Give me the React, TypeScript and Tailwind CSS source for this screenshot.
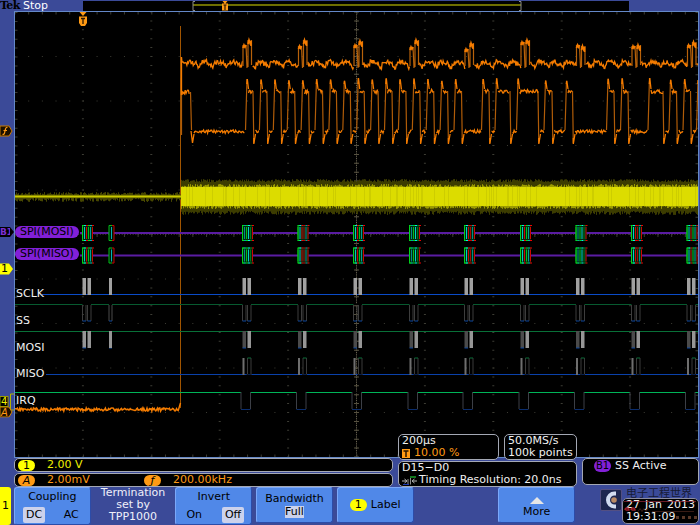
import type { ReactNode } from "react";

type Edge = { rise: number; fall: number };
type Marker = { y: number; node: ReactNode };

// Visible window of the graticule in screen units
const LEFT = 15;
const TOP = 12;
const WIDTH = 683;
const HEIGHT = 445;

const DIV_X = 68.4;
const DIV_Y = 44.5;
const CENTER_X = 356.5;
const CENTER_Y = 234.5;
const TRIGGER_X = 181;

const PACKETS = [242.5, 298, 353.5, 409.5, 464.5, 520.5, 576, 631.5, 687];

// Small seeded generator so the noise is the same on each render
function createNoise(seed: number) {
  let state = seed;
  return () => {
    state = (state * 1664525 + 1013904223) % 4294967296;
    return state / 4294967296;
  };
}

const topPercent = (y: number) => `${((y - TOP) / HEIGHT) * 100}%`;

// Demodulated data: regular preamble first, then the payload
const DATA_EDGES: Edge[] = [
  ...Array.from({ length: 16 }, (_, i) => ({
    rise: 246 + i * 13.9,
    fall: 253 + i * 13.9,
  })),
  { rise: 482, fall: 489 },
  { rise: 495.5, fall: 510 },
  { rise: 517, fall: 538 },
  { rise: 544.5, fall: 552 },
  { rise: 565.5, fall: 572.5 },
  { rise: 607, fall: 614 },
  { rise: 621, fall: 628 },
  { rise: 648.5, fall: 663 },
  { rise: 669.5, fall: 676.5 },
  { rise: 683.5, fall: 690.5 },
  { rise: 697, fall: 702 },
];

function noisyRun(from: number, to: number, y: number, amp: number, rnd: () => number) {
  let d = "";
  for (let x = from; x <= to; x += 0.8) {
    d += `${d ? "L" : "M"}${x.toFixed(1)} ${(y + (rnd() - 0.5) * amp).toFixed(1)}`;
  }
  return d;
}

function buildData() {
  const rnd = createNoise(7);
  let edges = "M181.5 91V135M190.5 92L191.5 130";
  let flats = noisyRun(182, 190, 92, 4, rnd) + "M191 131L192.500 143L194 134";
  flats += noisyRun(194, 245, 131.5, 3.4, rnd);
  edges += "M181 78V95";
  DATA_EDGES.forEach((edge, i) => {
    const next = DATA_EDGES[i + 1];
    const peak = 78 + rnd() * 3;
    edges += `M${edge.rise - 0.5} 130L${edge.rise + 1} ${peak}M${edge.fall} 91L${edge.fall + 0.8} 143`;
    flats += `M${edge.rise + 0.8} 84L${edge.rise + 1.3} ${peak}L${edge.rise + 2.5} 89`;
    flats += noisyRun(edge.rise + 2.5, edge.fall, 91.5, 4, rnd);
    flats += `M${edge.fall + 0.8} 138V144L${edge.fall + 2.5} 134`;
    if (next) flats += noisyRun(edge.fall + 2.5, next.rise - 0.5, 131.5, 3.4, rnd);
  });
  return { edges, flats };
}

function buildEnvelope() {
  const rnd = createNoise(21);
  let d = "M181.5 95V57";
  let broken = false;
  for (let x = 182; x < 698; x += 0.7) {
    if (PACKETS.some((p) => x >= p + 0.5 && x <= p + 9.5)) {
      broken = true;
      continue;
    }
    // slow hump with a sharp dip every 14 units
    const phase = (x - 186) % 14;
    const dip = phase > 11.5 ? 3.5 : phase > 10 ? 1.5 : 0;
    const hump = phase > 2 && phase < 7 ? -1.5 : 0;
    const y = 63.5 + dip + hump + (rnd() - 0.5) * 4.6;
    d += `${broken ? "M" : "L"}${x.toFixed(1)} ${y.toFixed(1)}`;
    broken = false;
  }
  return d;
}

const PULSES = PACKETS.map((p, i) => {
  const a = [45, 46, 45, 47, 49, 42, 45, 46, 45][i];
  const b = [40, 40, 41, 40, 43, 40, 46, 45, 42][i];
  return {
    sides: `M${p + 0.5} 66V${a}M${p + 3.5} ${a}L${p + 4.5} 68M${p + 5.5} 67V${b}M${p + 9} ${b}V65`,
    tops: `M${p + 0.5} ${a + 3}L${p + 1.5} ${a}L${p + 2.5} ${a + 2}L${p + 3.5} ${a}M${p + 5.5} ${b + 4}L${p + 6.5} ${b}L${p + 7.5} ${b + 3}L${p + 8.5} ${b + 1}V${b + 6}`,
  };
});

function Graticule() {
  const dots: ReactNode[] = [];
  for (let i = -4; i <= 4; i++) {
    const y = CENTER_Y + i * DIV_Y;
    dots.push(
      <line key={`h${i}`} x1={LEFT} x2={698} y1={y} y2={y} strokeDasharray="1 12.68" strokeDashoffset="0.5" />
    );
    const x = CENTER_X + i * DIV_X;
    dots.push(
      <line key={`v${i}`} x1={x} x2={x} y1={TOP} y2={457} strokeDasharray="1 7.9" strokeDashoffset="0.5" strokeWidth="2" />
    );
  }
  return (
    <g stroke="#3c3c34">
      {dots}
      <line x1={CENTER_X} x2={CENTER_X} y1={TOP} y2={457} stroke="#6b6553" strokeDasharray="1 0.78" />
      <line x1={CENTER_X} x2={CENTER_X} y1={TOP} y2={457} strokeWidth="5" stroke="#55503f" strokeDasharray="1 7.9" strokeDashoffset="0.5" />
      <line x1={LEFT} x2={698} y1={CENTER_Y} y2={CENTER_Y} strokeDasharray="1 1.736" />
      <line x1={LEFT} x2={698} y1={CENTER_Y} y2={CENTER_Y} strokeWidth="5" strokeDasharray="1 12.68" strokeDashoffset="0.5" />
      <line x1={LEFT} x2={698} y1={13} y2={13} strokeWidth="3" strokeDasharray="1 12.68" strokeDashoffset="0.5" />
      <line x1={LEFT} x2={698} y1={456} y2={456} strokeWidth="3" strokeDasharray="1 12.68" strokeDashoffset="0.5" />
      <line x1={16} x2={16} y1={TOP} y2={457} strokeWidth="3" strokeDasharray="1 7.9" />
      <line x1={697} x2={697} y1={TOP} y2={457} strokeWidth="3" strokeDasharray="1 7.9" />
    </g>
  );
}

function YellowTrace() {
  const rnd = createNoise(3);
  let quiet = "";
  let dim = "";
  let mid = "";
  for (let x = LEFT; x < TRIGGER_X; x++) {
    quiet += `M${x + 0.5} ${(195 - rnd() * 3).toFixed(1)}V${(198 + rnd() * 4).toFixed(1)}`;
  }
  for (let x = TRIGGER_X; x < 698; x++) {
    dim += `M${x + 0.5} ${(182 - rnd() * 3).toFixed(1)}V${(211 + rnd() * 4).toFixed(1)}`;
    mid += `M${x + 0.5} ${(187 - rnd() * 3).toFixed(1)}V${(206 + rnd() * 3).toFixed(1)}`;
  }
  return (
    <g>
      <path d={quiet} stroke="#464600" />
      <line x1={LEFT} x2={TRIGGER_X} y1={196.5} y2={196.5} stroke="#c9c900" strokeWidth="2" />
      <path d={dim} stroke="#3c3c00" />
      <path d={mid} stroke="#9b9b00" />
      <rect x={TRIGGER_X} y={187} width={517} height={19} fill="#dcdc00" />
      {Array.from({ length: 90 }, (_, i) => (
        <rect key={i} x={TRIGGER_X + Math.floor(rnd() * 516)} y={187} width={1} height={19} fill="#cdcd00" />
      ))}
    </g>
  );
}

const BUS_COLORS = [
  ["#00dc1e", "#00e6e0", "#f00000", "#00dc1e", "#00b4b4", "#f00000"],
  ["#00dc1e", "#00a0a0", "#00dc1e", "#00f0e6", "#00821e", "#f00000"],
  ["#00dc1e", "#00f0f0", "#f00000", "#c80000", "#00a0a0", "#f00000"],
];

function BusLane({ y }: { y: number }) {
  return (
    <g>
      <line x1={80} x2={698} y1={y} y2={y} stroke="#5a1ca2" strokeWidth="2" />
      {[82.5, ...PACKETS].map((p, i) => (
        <g key={p}>
          <rect x={p} y={y - 8} width={10.5} height={16} fill="#002a10" />
          <path d={`M${p + 3} ${y - 7.5}H${p}V${y + 7.5}H${p + 3}`} fill="none" stroke="#00be19" />
          {BUS_COLORS[i % 3].map((color, n) => (
            <g key={n} stroke={color}>
              <line x1={p + n * 2} x2={p + n * 2} y1={y - 6} y2={y + 6} strokeOpacity="0.85" />
              <path d={`M${p + n * 2 - 0.5} ${y - 7.5}h2M${p + n * 2 - 0.5} ${y + 7.5}h2`} />
            </g>
          ))}
        </g>
      ))}
      <rect x={109} y={y - 8} width={5} height={16} fill="#001407" />
      <path d={`M112 ${y - 7.5}H109V${y + 7.5}H112`} fill="none" stroke="#00be19" />
      <line x1={111.5} x2={111.5} y1={y - 6} y2={y + 6} stroke="#00b4b4" />
      <path d={`M112 ${y - 7.5}H114V${y + 7.5}H112`} fill="none" stroke="#c80000" />
    </g>
  );
}

function DigitalLanes() {
  const starts = [82.5, ...PACKETS];
  return (
    <g fill="none">
      {/* SCLK */}
      <line x1={42} x2={698} y1={294.5} y2={294.5} stroke="#0a4bc8" />
      {/* SS and MOSI idle high, MISO idles low */}
      <line x1={LEFT} x2={698} y1={304.5} y2={304.5} stroke="#075a2f" />
      <line x1={LEFT} x2={698} y1={331.5} y2={331.5} stroke="#087038" />
      <line x1={46} x2={698} y1={374.5} y2={374.5} stroke="#0a41aa" />
      {starts.map((p, i) => (
        <g key={p}>
          <path d={`M${p} 278h3.500v17h-3.500zM${p + 5} 278h3.500v17h-3.500z`} fill="#a0a0a0" />
          <rect x={p} y={304} width={8.5} height={1} fill="#000" />
          <path d={`M${p} 305V321M${p + 3.5} 321V305M${p + 5} 305V321M${p + 8.5} 321V305`} stroke="#3d3d3d" />
          <path d={`M${p} 321h3.500M${p + 5} 321h3.500`} stroke="#0a46a0" />
          <rect x={p} y={331} width={3.5} height={17} fill={i === 0 ? "#969696" : "#4b4b4b"} />
          <rect x={p + 5} y={331} width={3.5} height={17} fill="#969696" />
          <path d={`M${p} 348h3.500`} stroke="#0a46a0" />
          {i > 0 && (
            <>
              <rect x={p} y={358} width={2} height={17} fill="#6e6e6e" />
              <path d={`M${p + 5} 375V358M${p + 8.5} 358V375`} stroke="#3a3a3a" />
              <path d={`M${p + 5} 358h3.500`} stroke="#087038" />
              <path d={`M${p + 4} 374.500h5`} stroke="#000" strokeOpacity="0.5" />
            </>
          )}
        </g>
      ))}
      <rect x={109} y={278} width={3} height={17} fill="#a0a0a0" />
      <rect x={109} y={304} width={3} height={1} fill="#000" />
      <path d="M109 305V321M112 321V305" stroke="#4a4a4a" />
      <path d="M109 321H112M109 348H112" stroke="#0a46a0" />
      <rect x={109} y={331} width={3} height={17} fill="#969696" />
      {/* IRQ */}
      <line x1={LEFT} x2={698} y1={392.5} y2={392.5} stroke="#00b458" strokeWidth="1.200" />
      {PACKETS.map((p) => (
        <g key={p}>
          <rect x={p - 1.5} y={391.5} width={9.5} height={2} fill="#000" />
          <path d={`M${p - 1.5} 392V409M${p + 8} 392V409`} stroke="#3c3f46" />
          <path d={`M${p - 1.5} 409.500H${p + 8}`} stroke="#0a2d6e" />
        </g>
      ))}
    </g>
  );
}

function Waveforms() {
  const data = buildData();
  const baseline = noisyRun(LEFT, 179, 409.5, 3.2, createNoise(11));
  return (
    <svg
      viewBox={`${LEFT} ${TOP} ${WIDTH} ${HEIGHT}`}
      className="block h-auto w-full"
      role="img"
      aria-label="Waveforms"
    >
      <Graticule />
      <g fill="none">
        <path d="M180.500 26V408" stroke="#a05400" />
        <YellowTrace />
        <BusLane y={233} />
        <BusLane y={255.5} />
        <DigitalLanes />
        <path d={data.edges} stroke="#b05c08" strokeWidth="1.200" />
        <path d={data.flats} stroke="#f57c00" strokeWidth="1.300" />
        <path d={buildEnvelope()} stroke="#f57c00" strokeWidth="1.300" />
        {PULSES.map((pulse) => (
          <g key={pulse.sides}>
            <path d={pulse.sides} stroke="#b8620a" strokeWidth="1.200" />
            <path d={pulse.tops} stroke="#f57c00" strokeWidth="1.700" />
          </g>
        ))}
        <path d={`${baseline}L180.500 403`} stroke="#f57c00" strokeWidth="1.500" />
      </g>
      {/* Trigger position */}
      <path d="M79.500 12H86.500L83 16z" fill="#ff9a14" />
      <path d="M79 16.500H87V23L85 26H81L79 23z" fill="#ff9a14" />
      <path d="M81 18.500H85M83 18.500V24" stroke="#2a1600" strokeWidth="1.300" />
    </svg>
  );
}

// Channel handles in the left gutter
const MARKERS: Marker[] = [
  {
    y: 131,
    node: (
      <svg viewBox="0 0 13 12" className="h-3 w-[13px]">
        <path d="M0 1H9L12 6L9 11H0z" fill="#1c1000" stroke="#c87800" />
        <path d="M7.500 2.500Q6 2 5.500 4L4.500 8Q4 9.800 2.500 9.300M3.500 5.500H7" fill="none" stroke="#ff9a14" strokeWidth="1.200" />
      </svg>
    ),
  },
  {
    y: 232,
    node: (
      <span className="flex items-center">
        <span className="w-2.5 bg-black text-[9px] leading-[10px] font-bold tracking-tighter text-[#7a2fd0]">B1</span>
        <svg viewBox="0 0 4 10" className="h-2.5 w-1">
          <path d="M0 0L4 5L0 10z" />
        </svg>
      </span>
    ),
  },
  {
    y: 268.5,
    node: (
      <span className="relative block">
        <svg viewBox="0 0 13 12" className="h-3 w-[13px]">
          <path d="M0 .500H9L13 6L9 11.500H0z" fill="#ffff00" />
        </svg>
        <span className="absolute inset-0 pl-px text-[11px] leading-3 text-black">1</span>
      </span>
    ),
  },
  {
    y: 401,
    node: (
      <span className="relative block">
        <svg viewBox="0 0 14 18" className="h-[18px] w-3.5">
          <rect x="0" y="3.500" width="8" height="10" fill="#000" stroke="#9a9a00" />
          <path d="M14 1H10.500V17H14" fill="none" stroke="#b4b400" />
        </svg>
        <span className="absolute inset-0 pl-px text-[10px] leading-[17px] text-[#f0f000]">4</span>
      </span>
    ),
  },
  {
    y: 411.5,
    node: (
      <span className="relative block">
        <svg viewBox="0 0 13 11" className="h-[11px] w-[13px]">
          <path d="M0 .500H9L12 5.500L9 10.500H0z" fill="#1c1000" stroke="#d28200" />
        </svg>
        <span className="absolute inset-0 pl-px text-[10px] leading-[11px] text-[#ff9a14] italic">A</span>
      </span>
    ),
  },
];

const LANE_LABELS = [
  { y: 294, text: "SCLK" },
  { y: 321, text: "SS" },
  { y: 347.5, text: "MOSI" },
  { y: 374, text: "MISO" },
  { y: 400.5, text: "IRQ" },
];

const BUS_LABELS = [
  { y: 232, text: "SPI(MOSI)" },
  { y: 254, text: "SPI(MISO)" },
];

function TopBar() {
  return (
    <header className="flex h-[11px] items-center">
      <span className="w-[23px] font-['DejaVu_Serif',serif] text-[11px] leading-[11px] font-bold tracking-tighter text-black">
        Tek
      </span>
      <span className="w-[60px] text-[11px] leading-[11px] text-white">Stop</span>
      <svg viewBox="83 0 546 11" preserveAspectRatio="none" className="h-[11px] min-w-0 flex-1" role="img" aria-label="Record overview">
        <rect x="83" y="1" width="546" height="10" fill="#000" />
        <path d="M193 5H521" stroke="#6e6e00" strokeWidth="2" />
        <path d="M195 1.500H193V10.500H195M519 1.500H521V10.500H519" fill="none" stroke="#8c8c8c" />
        <path d="M222.500 1H227.500L225 4zM222 3.500H228V10.500H222z" fill="#ff9a14" />
        <path d="M223.500 5H226.500M225 5V10" stroke="#2a1600" strokeWidth="1.200" />
      </svg>
      <span className="w-[71px]" />
    </header>
  );
}

function Plot() {
  return (
    <main className="flex pr-px">
      <div className="relative w-3.5">
        {MARKERS.map((marker) => (
          <div
            key={marker.y}
            className="absolute left-0 -translate-y-1/2"
            style={{ top: topPercent(marker.y) }}
          >
            {marker.node}
          </div>
        ))}
      </div>
      <div className="relative min-w-0 flex-1 border border-[#6488c8] bg-black">
        <Waveforms />
        {BUS_LABELS.map((label) => (
          <span
            key={label.text}
            className="absolute left-0 -translate-y-1/2 rounded-full bg-[#8220d8] px-[5px] text-[11px] leading-3 text-black"
            style={{ top: topPercent(label.y) }}
          >
            {label.text}
          </span>
        ))}
        {LANE_LABELS.map((label) => (
          <span
            key={label.text}
            className="absolute left-px -translate-y-1/2 text-[11px] leading-3 text-[#f0f0f0]"
            style={{ top: topPercent(label.y) }}
          >
            {label.text}
          </span>
        ))}
      </div>
    </main>
  );
}

function Readouts() {
  return (
    <section className="relative -mt-6 flex items-end gap-[5px] pr-px pl-3.5 text-[11px] leading-3 text-[#f0f0f0]">
      <div className="flex min-w-0 flex-1 flex-col gap-px">
        <div className="flex h-3.5 items-center rounded-[5px] border border-[#a4a8b4] bg-black pl-[3px] text-[#f0f000]">
          <span className="w-[17px] rounded-full bg-[#ffff00] text-center leading-[11px] text-black">1</span>
          <span className="pl-3">2.00 V</span>
        </div>
        <div className="flex h-3.5 items-center rounded-[5px] border border-[#a4a8b4] bg-black pl-[3px] text-[#ff9a14]">
          <span className="w-[17px] rounded-full bg-[#ff9a14] text-center leading-[11px] text-black italic">A</span>
          <span className="w-[109px] pl-3">2.00mV</span>
          <span className="w-[17px] rounded-full bg-[#ff9a14] text-center leading-[11px] text-black italic">ƒ</span>
          <span className="pl-3">200.00kHz</span>
        </div>
      </div>

      <div className="flex w-[179px] flex-col gap-px">
        <div className="flex gap-[5px]">
          <div className="w-[101px] rounded-[5px] border border-[#a4a8b4] bg-black pl-[3px]">
            <p>200µs</p>
            <p className="flex items-center gap-1 text-[#ff9a14]">
              <svg viewBox="0 0 8 9" className="h-[9px] w-2">
                <path d="M0 0H8V9H0z" fill="#ff9a14" />
                <path d="M1.500 2H6.500M4 2V8" stroke="#2a1600" strokeWidth="1.500" />
              </svg>
              10.00 %
            </p>
          </div>
          <div className="flex-1 rounded-[5px] border border-[#a4a8b4] bg-black pl-[3px] whitespace-nowrap">
            <p>50.0MS/s</p>
            <p>100k points</p>
          </div>
        </div>
        <div className="rounded-[5px] border border-[#a4a8b4] bg-black pl-[3px]">
          <p>D15−D0</p>
          <p className="flex items-center gap-0.5 whitespace-nowrap">
            <svg viewBox="0 0 15 9" className="h-[9px] w-[15px]">
              <path d="M0 5H4M2.500 3L5 5L2.500 7M15 5H11M12.500 3L10 5L12.500 7" fill="none" stroke="#b4b4b4" />
              <path d="M6 8.500V3M8.500 8.500V2" stroke="#8c8c8c" />
              <path d="M8 1H14" stroke="#14a028" strokeWidth="1.500" />
              <path d="M1 8.500H7" stroke="#1e3cb4" />
            </svg>
            Timing Resolution: 20.0ns
          </p>
        </div>
      </div>

      <div className="mb-0.5 flex h-[27px] w-[117px] items-start gap-1 rounded-[5px] border border-[#a4a8b4] bg-black pt-px pl-[11px]">
        <span className="w-[17px] rounded-full bg-[#8220d8] text-center text-[10px] leading-3 text-black">B1</span>
        <span>SS Active</span>
      </div>
    </section>
  );
}

const TILE =
  "min-w-0 rounded-[3px] border border-[#7aa8fa] border-r-[#2c4ca8] border-b-[#2c4ca8] bg-[#5088e8] text-[11px] leading-3 text-black";
const SELECTED = "rounded-xs bg-[#ccd2ec] px-[3px]";

function SiteLogo() {
  return (
    <svg viewBox="0 0 22 22" className="mt-0.5 size-[22px]">
      <rect x=".500" y=".500" width="21" height="21" rx="1.500" fill="#1e2750" stroke="#6e5f8c" strokeOpacity="0.6" />
      <path d="M16 4.500H14.500A6.500 6.500 0 0 0 14.500 17.500H16" fill="none" stroke="#d2dcf0" strokeWidth="4" />
      <circle cx="14" cy="11" r="2.800" fill="#b98a64" />
    </svg>
  );
}

function SoftMenu() {
  return (
    <nav className="flex flex-1">
      <span className="flex w-[11px] items-center justify-center rounded-r-[3px] bg-[#ffff00] text-[11px] text-black">
        1
      </span>
      <div className="ml-[3px] grid min-w-0 flex-1 grid-cols-[repeat(7,minmax(0,1fr))_120px] gap-1 pr-px">
        <button type="button" className={`${TILE} flex flex-col justify-between pt-[3px] pb-px`}>
          <span className="w-full text-center">Coupling</span>
          <span className="flex w-full justify-between pr-[11px] pl-[8px] leading-4">
            <span className={SELECTED}>DC</span>
            <span>AC</span>
          </span>
        </button>
        <p className="-mx-1 text-center text-[11px] leading-3 text-[#f0f0fa]">
          Termination set by TPP1000
        </p>
        <button type="button" className={`${TILE} flex flex-col justify-between pt-[3px] pb-px`}>
          <span className="w-full text-center">Invert</span>
          <span className="flex w-full justify-between pr-[7px] pl-[10px] leading-4">
            <span>On</span>
            <span className={SELECTED}>Off</span>
          </span>
        </button>
        <button type="button" className={`${TILE} mb-0.5 flex flex-col items-center justify-center gap-px`}>
          <span>Bandwidth</span>
          <span className="bg-[#ccd2ec]">Full</span>
        </button>
        <button type="button" className={`${TILE} mb-0.5 flex items-center justify-center gap-1`}>
          <span className="w-[17px] rounded-full bg-[#ffff00]">1</span>
          <span>Label</span>
        </button>
        <span />
        <button type="button" className={`${TILE} mb-0.5 flex flex-col items-center justify-center gap-0.5`}>
          <svg viewBox="0 0 14 7" className="mt-1 h-[7px] w-3.5">
            <path d="M7 0L14 7H0z" fill="#e6e6e6" />
          </svg>
          <span>More</span>
        </button>
        <div className="flex items-start justify-end">
          <SiteLogo />
          <div className="relative w-[77px]">
            <p className="pl-1 font-['Noto_Sans_CJK_SC',sans-serif] text-[11px] leading-[11px] whitespace-nowrap text-[#161a34]">
              电子工程世界
            </p>
            <time
              dateTime="2013-01-27T19:31:09"
              className="block rounded-[5px] border border-[#8c8ca0] bg-black pl-[3px] text-[11px] leading-3 whitespace-nowrap text-[#f0f0f0]"
            >
              <span className="flex justify-between pr-[3px]">
                <span>27</span>
                <span>Jan</span>
                <span>2013</span>
              </span>
              <span className="block">19:31:09</span>
            </time>
            {/* Faded site stamp over the clock */}
            <svg viewBox="0 0 77 24" className="absolute bottom-0 left-0 h-6 w-[77px]" aria-hidden="true">
              <path d="M2 1.500H74" stroke="#9b2a3c" strokeOpacity="0.7" />
              <path d="M3 10a2 2 0 1 1 4 0H3.500M9 10a2 2 0 1 1 4 0H9.500" fill="none" stroke="#a01e28" strokeWidth="1.300" />
              <path d="M16 11.500l2-3l2 3l2-3l2 3l2-3M30 11.500H72" fill="none" stroke="#50281e" strokeOpacity="0.7" />
              <path d="M54 16h3v3h-3zM60 16h3v3h-3zM66 16h3v3h-3zM72 16h3v3h-3z" fill="#6e4632" fillOpacity="0.8" />
            </svg>
          </div>
        </div>
      </div>
    </nav>
  );
}

export default function App() {
  return (
    <div className="flex min-h-screen flex-col overflow-hidden bg-[#3b4a98] font-['DejaVu_Sans',sans-serif]">
      <TopBar />
      <Plot />
      <Readouts />
      <SoftMenu />
    </div>
  );
}
